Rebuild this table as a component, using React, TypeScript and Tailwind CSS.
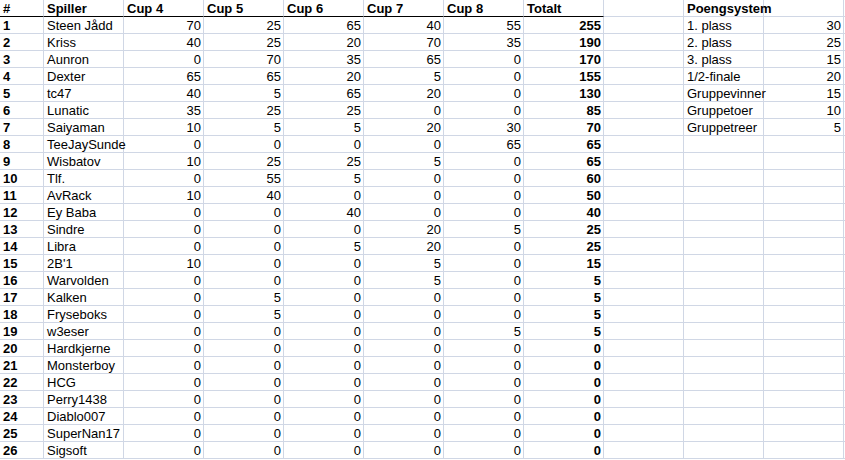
import React from "react";

type Row = [number, string, number, number, number, number, number, number];

const players: Row[] = [
  [1, "Steen Jådd", 70, 25, 65, 40, 55, 255],
  [2, "Kriss", 40, 25, 20, 70, 35, 190],
  [3, "Aunron", 0, 70, 35, 65, 0, 170],
  [4, "Dexter", 65, 65, 20, 5, 0, 155],
  [5, "tc47", 40, 5, 65, 20, 0, 130],
  [6, "Lunatic", 35, 25, 25, 0, 0, 85],
  [7, "Saiyaman", 10, 5, 5, 20, 30, 70],
  [8, "TeeJaySunde", 0, 0, 0, 0, 65, 65],
  [9, "Wisbatov", 10, 25, 25, 5, 0, 65],
  [10, "Tlf.", 0, 55, 5, 0, 0, 60],
  [11, "AvRack", 10, 40, 0, 0, 0, 50],
  [12, "Ey Baba", 0, 0, 40, 0, 0, 40],
  [13, "Sindre", 0, 0, 0, 20, 5, 25],
  [14, "Libra", 0, 0, 5, 20, 0, 25],
  [15, "2B'1", 10, 0, 0, 5, 0, 15],
  [16, "Warvolden", 0, 0, 0, 5, 0, 5],
  [17, "Kalken", 0, 5, 0, 0, 0, 5],
  [18, "Fryseboks", 0, 5, 0, 0, 0, 5],
  [19, "w3eser", 0, 0, 0, 0, 5, 5],
  [20, "Hardkjerne", 0, 0, 0, 0, 0, 0],
  [21, "Monsterboy", 0, 0, 0, 0, 0, 0],
  [22, "HCG", 0, 0, 0, 0, 0, 0],
  [23, "Perry1438", 0, 0, 0, 0, 0, 0],
  [24, "Diablo007", 0, 0, 0, 0, 0, 0],
  [25, "SuperNan17", 0, 0, 0, 0, 0, 0],
  [26, "Sigsoft", 0, 0, 0, 0, 0, 0],
];

const points: [string, number][] = [
  ["1. plass", 30],
  ["2. plass", 25],
  ["3. plass", 15],
  ["1/2-finale", 20],
  ["Gruppevinner", 15],
  ["Gruppetoer", 10],
  ["Gruppetreer", 5],
];

const headers = ["#", "Spiller", "Cup 4", "Cup 5", "Cup 6", "Cup 7", "Cup 8", "Totalt"];

function Cell({
  children,
  right,
  bold,
  head,
}: {
  children?: React.ReactNode;
  right?: boolean;
  bold?: boolean;
  head?: boolean;
}) {
  return (
    <div
      className={`h-[17px] border-r border-b leading-[18px] whitespace-nowrap overflow-visible ${
        head ? "border-b-black" : "border-b-[#d0d7e5]"
      } border-r-[#d0d7e5] ${right ? "text-right pr-[2px]" : "pl-[3px]"} ${bold ? "font-bold" : ""}`}
    >
      {children}
    </div>
  );
}

export default function App() {
  return (
    <div className="w-[845px] h-[460px] overflow-hidden bg-white text-black text-[13px] font-['Liberation_Sans',Arial,sans-serif]">
      <div className="grid grid-cols-[44px_repeat(10,80px)_1fr]">
        {/* header row */}
        {headers.map((h) => (
          <Cell key={h} head bold>
            {h}
          </Cell>
        ))}
        <Cell />
        <Cell bold>Poengsystem</Cell>
        <Cell />
        <Cell />

        {players.map((p, i) => {
          const pt = points[i];
          return (
            <React.Fragment key={p[0]}>
              <Cell bold>{p[0]}</Cell>
              <Cell>{p[1]}</Cell>
              <Cell right>{p[2]}</Cell>
              <Cell right>{p[3]}</Cell>
              <Cell right>{p[4]}</Cell>
              <Cell right>{p[5]}</Cell>
              <Cell right>{p[6]}</Cell>
              <Cell right bold>
                {p[7]}
              </Cell>
              <Cell />
              <Cell>{pt ? pt[0] : ""}</Cell>
              <Cell right>{pt ? pt[1] : ""}</Cell>
              <Cell />
            </React.Fragment>
          );
        })}
      </div>
    </div>
  );
}
